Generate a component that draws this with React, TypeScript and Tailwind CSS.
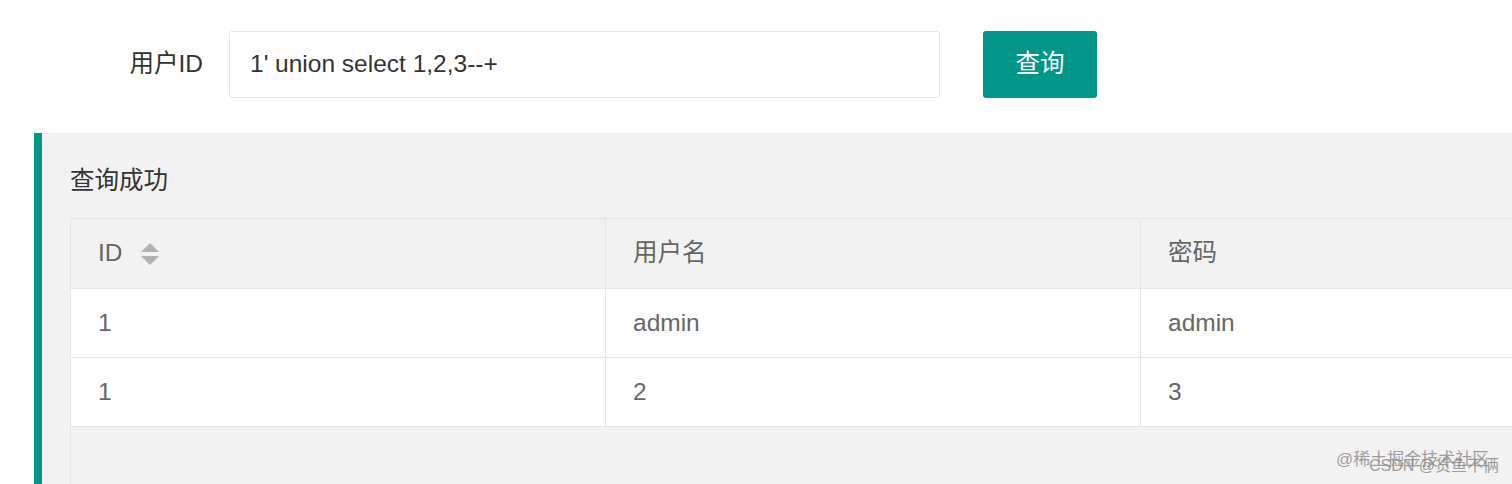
import React from "react";

function SortIcon() {
  return (
    <svg width="18" height="24" viewBox="0 0 18 24" className="ml-[18px]">
      <polygon points="9,1 18,10 0,10" fill="#b2b2b2" />
      <polygon points="0,14 18,14 9,23" fill="#b2b2b2" />
    </svg>
  );
}

export default function App() {
  const rows = [
    ["1", "admin", "admin"],
    ["1", "2", "3"],
  ];
  return (
    <div className="relative w-[1512px] h-[484px] overflow-hidden bg-white font-['Liberation_Sans','Noto_Sans_CJK_SC',sans-serif]">
      <div className="flex items-center pt-[31px]">
        <div className="w-[229px] pr-[26px] text-right text-[24.5px] text-[#333]">用户ID</div>
        <div className="w-[711px] h-[67px] flex items-center border border-[#e6e6e6] rounded-[3px] pl-[20px] text-[24.5px] text-[#333]">
          1' union select 1,2,3--+
        </div>
        <div className="ml-[43px] w-[114px] h-[67px] flex items-center justify-center bg-[#009688] rounded-[3px] text-white text-[24.5px]">
          查询
        </div>
      </div>

      <div className="mt-[35px] ml-[34px] h-[351px] border-l-[8px] border-[#009688] bg-[#f2f2f2] pl-[28px] pt-[29px]">
        <div className="h-[38px] leading-[38px] text-[24.5px] text-[#333]">查询成功</div>
        <div className="mt-[18px] h-[300px] border-l border-t border-[#e6e6e6] text-[24.5px] text-[#666]">
          <div className="grid grid-cols-[535px_535px_535px]">
            <div className="h-[70px] flex items-center pl-[27px] bg-[#f2f2f2] border-r border-b border-[#e6e6e6] shadow-[1px_0_3px_rgba(0,0,0,0.06)]">
              ID
              <SortIcon />
            </div>
            <div className="h-[70px] flex items-center pl-[27px] bg-[#f2f2f2] border-r border-b border-[#e6e6e6]">用户名</div>
            <div className="h-[70px] flex items-center pl-[27px] bg-[#f2f2f2] border-r border-b border-[#e6e6e6]">密码</div>
            {rows.map((r, i) =>
              r.map((c, j) => (
                <div
                  key={`${i}-${j}`}
                  className="h-[69px] flex items-center pl-[27px] bg-white border-r border-b border-[#e6e6e6]"
                >
                  {c}
                </div>
              ))
            )}
          </div>
        </div>
      </div>

      <div className="absolute left-[1336px] top-[447px] text-[17px] text-[#8a8a8a] opacity-80 whitespace-nowrap">
        @稀土掘金技术社区
      </div>
      <div className="absolute left-[1369px] top-[454px] text-[16px] text-[#8a8a8a] opacity-80 whitespace-nowrap">
        CSDN @货鱼不俩
      </div>
    </div>
  );
}
